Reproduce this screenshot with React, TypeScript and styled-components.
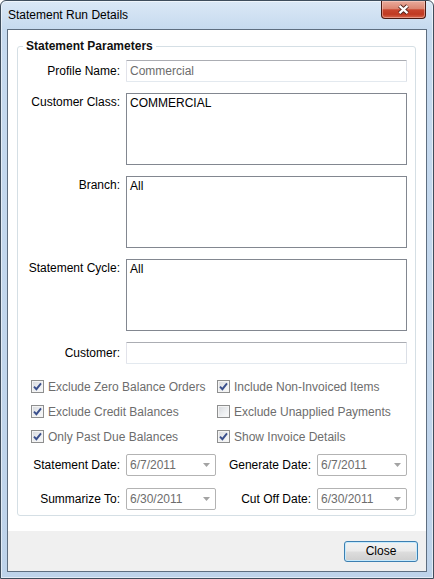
import styled, { createGlobalStyle } from 'styled-components';

const GlobalStyle = createGlobalStyle`
	html, body {
		margin: 0;
		padding: 0;
	}
	body {
		font-family: "Liberation Sans", Arial, sans-serif;
		font-size: 12px;
		color: #000;
	}
`;

const Window = styled.div`
	box-sizing: border-box;
	width: 434px;
	height: 579px;
	display: flex;
	flex-direction: column;
	padding: 0 6px 6px;
	border: 1px solid #3f4d5c;
	border-radius: 6px 6px 0 0;
	background: linear-gradient(180deg, #dbe8f6 0px, #c6daef 28px, #bed3ea 100%);
	box-shadow: inset 0 0 0 1px rgba(255, 255, 255, 0.55);
`;

const TitleBar = styled.div`
	height: 28px;
	display: flex;
	justify-content: space-between;
	align-items: flex-start;
	flex-shrink: 0;
`;

const Title = styled.div`
	padding: 7px 0 0 1px;
	line-height: 14px;
	color: #000;
`;

const CloseX = styled.div`
	box-sizing: border-box;
	width: 45px;
	height: 18px;
	margin-right: 1px;
	display: flex;
	align-items: center;
	justify-content: center;
	border: 1px solid #4a1a12;
	border-top: none;
	border-radius: 0 0 4px 4px;
	background: linear-gradient(180deg, #e9ab9c 0%, #dc8672 45%, #c8452e 52%, #c03a22 78%, #d7664c 100%);
	box-shadow: inset 0 0 0 1px rgba(255, 220, 210, 0.45);
`;

const Client = styled.div`
	flex: 1;
	display: flex;
	flex-direction: column;
	border: 1px solid #5e6e80;
	background: #fff;
`;

const Content = styled.div`
	flex: 1;
	padding: 9px 10px 0 9px;
`;

const Group = styled.fieldset`
	margin: 0;
	min-width: 0;
	padding: 7px 8px 5px 0;
	border: 1px solid #d5dfe5;
	border-radius: 3px;
`;

const Legend = styled.legend`
	margin-left: 5px;
	padding: 0 3px;
	line-height: 14px;
	font-weight: bold;
	color: #111;
`;

const Fields = styled.div`
	display: grid;
	grid-template-columns: 102px 1fr;
	column-gap: 6px;
	row-gap: 11px;
`;

const Label = styled.div<{ $top?: boolean }>`
	text-align: right;
	line-height: 14px;
	padding-top: ${(p) => (p.$top ? 2 : 4)}px;
	white-space: nowrap;
`;

const TextBox = styled.input`
	box-sizing: border-box;
	width: 100%;
	height: 22px;
	margin: 0;
	padding: 0 3px;
	border: 1px solid;
	border-color: #abadb3 #dbdfe6 #e3e9ef #e2e3ea;
	border-radius: 1px;
	background: #fff;
	font: inherit;
	color: #6d6d6d;
	outline: none;
`;

const ListBox = styled.div`
	box-sizing: border-box;
	height: 72px;
	padding: 2px 3px;
	border: 1px solid #828790;
	line-height: 14px;
	color: #000;
`;

const Checks = styled.div`
	display: grid;
	grid-template-columns: 186px 1fr;
	grid-auto-rows: 25px;
	margin-top: 10px;
	padding-left: 13px;
`;

const CheckItem = styled.div`
	display: flex;
	align-items: center;
	gap: 4px;
	line-height: 14px;
	color: #6d6d6d;
	white-space: nowrap;
`;

const Box = styled.span`
	box-sizing: border-box;
	width: 13px;
	height: 13px;
	flex-shrink: 0;
	display: flex;
	align-items: center;
	justify-content: center;
	border: 1px solid #8e8f8f;
	background: linear-gradient(135deg, #d6d8dc 0%, #eef0f2 60%, #fafafa 100%);
	box-shadow: inset 0 0 0 1px #f4f4f4;
`;

const Dates = styled.div`
	display: grid;
	grid-template-columns: 102px 90px 89px 90px;
	column-gap: 6px;
	row-gap: 12px;
	margin-top: 5px;
	align-items: center;
`;

const DateLabel = styled.div`
	text-align: right;
	line-height: 14px;
	white-space: nowrap;
`;

const Combo = styled.div`
	box-sizing: border-box;
	height: 22px;
	display: flex;
	align-items: center;
	justify-content: space-between;
	padding: 0 5px 0 3px;
	border: 1px solid #b3b3b3;
	border-radius: 2px;
	background: #fff;
	color: #6d6d6d;
`;

const Footer = styled.div`
	height: 40px;
	flex-shrink: 0;
	display: flex;
	justify-content: flex-end;
	align-items: center;
	padding-right: 8px;
	background: #f0f0f0;
`;

const Button = styled.button`
	box-sizing: border-box;
	width: 74px;
	height: 21px;
	margin: 0;
	padding: 0;
	border: 1px solid #3c7fb1;
	border-radius: 3px;
	background: linear-gradient(180deg, #f2f2f2 0%, #ebebeb 48%, #dddddd 52%, #cfcfcf 100%);
	box-shadow: inset 0 0 0 1px #c6eafd;
	font: inherit;
	color: #000;
`;

const CheckMark = () => (
	<svg width="9" height="9" viewBox="0 0 9 9" aria-hidden="true">
		<path d="M1 4.6 L3.4 7.2 L8 1.4" fill="none" stroke="#3a4f8c" strokeWidth="1.9" />
	</svg>
);

const Arrow = () => (
	<svg width="7" height="4" viewBox="0 0 7 4" aria-hidden="true">
		<path d="M0 0 H7 L3.5 4 Z" fill="#a3a3a3" />
	</svg>
);

const CloseGlyph = () => (
	<svg width="13" height="11" viewBox="0 0 13 11" aria-hidden="true">
		<path d="M2.5 1.8 L10.5 9.2 M10.5 1.8 L2.5 9.2" stroke="#4a2019" strokeWidth="4" />
		<path d="M2.5 1.8 L10.5 9.2 M10.5 1.8 L2.5 9.2" stroke="#fff" strokeWidth="2.3" />
	</svg>
);

const Check = ({ label, checked }: { label: string; checked: boolean }) => (
	<CheckItem>
		<Box>{checked && <CheckMark />}</Box>
		{label}
	</CheckItem>
);

const checks = [
	{ label: 'Exclude Zero Balance Orders', checked: true },
	{ label: 'Include Non-Invoiced Items', checked: true },
	{ label: 'Exclude Credit Balances', checked: true },
	{ label: 'Exclude Unapplied Payments', checked: false },
	{ label: 'Only Past Due Balances', checked: true },
	{ label: 'Show Invoice Details', checked: true },
];

export default function App() {
	return (
		<>
			<GlobalStyle />
			<Window>
				<TitleBar>
					<Title>Statement Run Details</Title>
					<CloseX>
						<CloseGlyph />
					</CloseX>
				</TitleBar>
				<Client>
					<Content>
						<Group>
							<Legend>Statement Parameters</Legend>
							<Fields>
								<Label>Profile Name:</Label>
								<TextBox readOnly value="Commercial" />
								<Label $top>Customer Class:</Label>
								<ListBox>COMMERCIAL</ListBox>
								<Label $top>Branch:</Label>
								<ListBox>All</ListBox>
								<Label $top>Statement Cycle:</Label>
								<ListBox>All</ListBox>
								<Label>Customer:</Label>
								<TextBox readOnly value="" />
							</Fields>
							<Checks>
								{checks.map((c) => (
									<Check key={c.label} label={c.label} checked={c.checked} />
								))}
							</Checks>
							<Dates>
								<DateLabel>Statement Date:</DateLabel>
								<Combo>
									6/7/2011
									<Arrow />
								</Combo>
								<DateLabel>Generate Date:</DateLabel>
								<Combo>
									6/7/2011
									<Arrow />
								</Combo>
								<DateLabel>Summarize To:</DateLabel>
								<Combo>
									6/30/2011
									<Arrow />
								</Combo>
								<DateLabel>Cut Off Date:</DateLabel>
								<Combo>
									6/30/2011
									<Arrow />
								</Combo>
							</Dates>
						</Group>
					</Content>
					<Footer>
						<Button>Close</Button>
					</Footer>
				</Client>
			</Window>
		</>
	);
}
